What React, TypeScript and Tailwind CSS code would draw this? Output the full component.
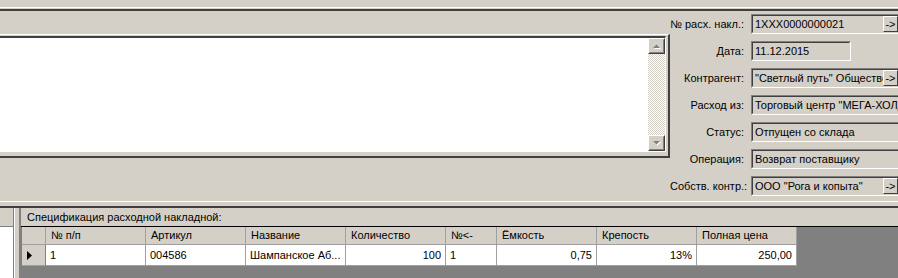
import React from "react";

interface FieldProps {
  label: string;
  value: string;
  short?: boolean;
  button?: boolean;
}

const fields: FieldProps[] = [
  { label: "№ расх. накл.:", value: "1XXX0000000021", button: true },
  { label: "Дата:", value: "11.12.2015", short: true },
  { label: "Контрагент:", value: "\"Светлый путь\" Общество с ограниченной ответственностью", button: true },
  { label: "Расход из:", value: "Торговый центр \"МЕГА-ХОЛДИНГ\"" },
  { label: "Статус:", value: "Отпущен со склада" },
  { label: "Операция:", value: "Возврат поставщику" },
  { label: "Собств. контр.:", value: "ООО \"Рога и копыта\"", button: true },
];

interface Column {
  title: string;
  value: string;
  width: string;
  right?: boolean;
}

const columns: Column[] = [
  { title: "№ п/п", value: "1", width: "w-[100px]" },
  { title: "Артикул", value: "004586", width: "w-[100px]" },
  { title: "Название", value: "Шампанское Аб...", width: "w-[100px]" },
  { title: "Количество", value: "100", width: "w-[100px]", right: true },
  { title: "№<-", value: "1", width: "w-[51px]" },
  { title: "Ёмкость", value: "0,75", width: "w-[100px]", right: true },
  { title: "Крепость", value: "13%", width: "w-[100px]", right: true },
  { title: "Полная цена", value: "250,00", width: "w-[100px]", right: true },
];

function ArrowButton() {
  return (
    <div className="flex h-[16px] w-[15px] shrink-0 items-center justify-center border border-t-white border-l-white border-b-[#404040] border-r-[#404040] bg-[#d4d0c8] text-[11px] leading-none">
      -&gt;
    </div>
  );
}

function Field({ label, value, short, button }: FieldProps) {
  return (
    <div className="flex h-[20px] items-center">
      <div className="w-[74px] shrink-0 whitespace-nowrap text-right">{label}</div>
      <div
        className={`ml-[7px] h-[20px] shrink-0 border border-t-[#808080] border-l-[#808080] border-b-white border-r-white ${
          short ? "w-[100px]" : "w-[149px]"
        }`}
      >
        <div className="flex h-full items-center overflow-hidden border border-t-[#404040] border-l-[#404040] border-b-[#d4d0c8] border-r-[#d4d0c8] bg-[#d4d0c8]">
          <span className="flex-1 overflow-hidden whitespace-nowrap pl-[2px]">{value}</span>
          {button && <ArrowButton />}
        </div>
      </div>
    </div>
  );
}

function ScrollButton({ up }: { up?: boolean }) {
  return (
    <div className="h-[16px] border border-t-white border-l-white border-b-[#404040] border-r-[#404040] bg-[#d4d0c8]">
      <div className="flex h-full items-center justify-center border border-t-[#d4d0c8] border-l-[#d4d0c8] border-b-[#808080] border-r-[#808080]">
        <svg width="8" height="5" viewBox="0 0 8 5">
          {up ? (
            <>
              <polygon points="1,5 8,5 4.5,1.5" fill="#ffffff" />
              <polygon points="0,4 7,4 3.5,0.5" fill="#808080" />
            </>
          ) : (
            <>
              <polygon points="1,1 8,1 4.5,4.5" fill="#ffffff" />
              <polygon points="0,0 7,0 3.5,3.5" fill="#808080" />
            </>
          )}
        </svg>
      </div>
    </div>
  );
}

export default function App() {
  return (
    <div className="h-[278px] w-[898px] overflow-hidden bg-[#d4d0c8] font-['Liberation_Sans',Arial,sans-serif] text-[11px] text-black">
      <div className="h-[7px]" />
      <div className="h-[4px] border-t border-b-2 border-t-white border-b-[#404040]" />

      {/* upper part: memo + header fields */}
      <div className="flex h-[190px]">
        <div className="w-[670px] shrink-0 pt-[23px]">
          <div className="h-[124px] border-t border-r-2 border-b-2 border-t-white border-r-[#404040] border-b-[#404040] pt-[1px] pr-[2px] pb-[4px]">
            <div className="flex h-full border-t-2 border-r border-b border-t-[#404040] border-r-white border-b-white">
              <div className="flex-1 bg-white" />
              <div className="flex w-[17px] flex-col bg-[repeating-conic-gradient(#ffffff_0_25%,#d4d0c8_0_50%)] bg-[length:2px_2px]">
                <ScrollButton up />
                <div className="flex-1" />
                <ScrollButton />
              </div>
            </div>
          </div>
        </div>
        <div className="flex flex-1 flex-col gap-[7px] pt-[3px]">
          {fields.map((f) => (
            <Field key={f.label} {...f} />
          ))}
        </div>
      </div>

      <div className="h-[7px] border-t border-b-2 border-t-white border-b-[#404040]" />

      {/* specification */}
      <div className="flex h-[70px]">
        <div className="w-[15px] shrink-0 border-r border-r-white">
          <div className="flex h-full flex-col border-r border-r-[#808080]">
            <div className="h-[19px] border-b border-b-[#808080]" />
            <div className="flex-1 bg-white" />
          </div>
        </div>
        <div className="w-[4px] shrink-0" />
        <div className="flex flex-1 flex-col border-l-2 border-l-[#808080]">
          <div className="flex h-[19px] items-center border-b border-b-black pl-[6px]">
            Спецификация расходной накладной:
          </div>
          <div className="flex-1 border-l border-l-[#808080] bg-[#808080]">
            <div className="flex h-[18px] bg-[#d4d0c8]">
              <div className="w-[24px] shrink-0 border-r border-b border-r-[#a0a0a0] border-b-[#a0a0a0]" />
              {columns.map((c) => (
                <div
                  key={c.title}
                  className={`${c.width} flex shrink-0 items-center overflow-hidden whitespace-nowrap border-r border-b border-r-[#a0a0a0] border-b-[#a0a0a0] pl-[5px]`}
                >
                  {c.title}
                </div>
              ))}
              <div className="flex-1 bg-[#808080]" />
            </div>
            <div className="flex h-[21px]">
              <div className="flex w-[24px] shrink-0 items-center border-r border-b border-r-[#808080] border-b-[#a0a0a0] bg-[#d4d0c8] pl-[5px]">
                <svg width="5" height="9" viewBox="0 0 5 9">
                  <polygon points="0,0 5,4.5 0,9" fill="#000000" />
                </svg>
              </div>
              {columns.map((c) => (
                <div
                  key={c.title}
                  className={`${c.width} flex shrink-0 items-center overflow-hidden whitespace-nowrap border-r border-b border-r-[#a0a0a0] border-b-[#a0a0a0] bg-white px-[4px] ${
                    c.right ? "justify-end" : "justify-start"
                  }`}
                >
                  {c.value}
                </div>
              ))}
            </div>
          </div>
        </div>
      </div>
    </div>
  );
}
